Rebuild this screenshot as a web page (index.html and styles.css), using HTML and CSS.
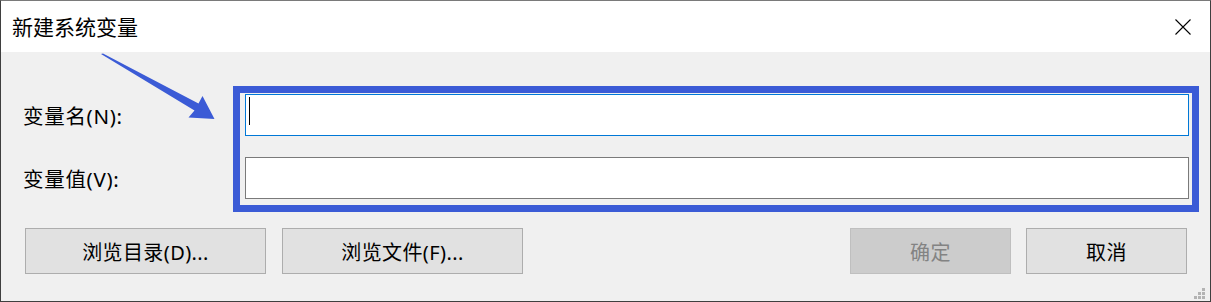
FILE: index.html
```html
<!DOCTYPE html>
<html lang="zh-CN">
<head>
<meta charset="utf-8">
<title>新建系统变量</title>
<link rel="stylesheet" href="styles.css">
</head>
<body>
<div class="window">
  <div class="titlebar">
    <span class="title">新建系统变量</span>
    <svg class="close" width="16" height="16" viewBox="0 0 16 16" aria-label="关闭">
      <path d="M0.5 0.5 L15.5 15.5 M15.5 0.5 L0.5 15.5" stroke="#000" stroke-width="1.1" fill="none"/>
    </svg>
  </div>
  <div class="content">
    <div class="form">
      <label class="label">变量名(N):</label>
      <div class="field focused"><span class="caret"></span></div>
      <label class="label">变量值(V):</label>
      <div class="field"></div>
    </div>
    <div class="buttons">
      <button class="btn wide">浏览目录(D)...</button>
      <button class="btn wide">浏览文件(F)...</button>
      <button class="btn narrow disabled push">确定</button>
      <button class="btn narrow">取消</button>
    </div>
  </div>
  <div class="highlight"></div>
  <svg class="arrow" width="230" height="130" viewBox="0 0 230 130">
    <polygon points="101,54 103,53.5 198.5,103.5 202.5,96 214.5,119 188.5,117.5 194.5,110.5" fill="#3b5bd6"/>
  </svg>
  <svg class="grip" width="11" height="11" viewBox="0 0 11 11">
    <rect x="8" y="0" width="3" height="3" fill="#b3b3b3"/>
    <rect x="4" y="4" width="3" height="3" fill="#b3b3b3"/>
    <rect x="8" y="4" width="3" height="3" fill="#b3b3b3"/>
    <rect x="0" y="8" width="3" height="3" fill="#b3b3b3"/>
    <rect x="4" y="8" width="3" height="3" fill="#b3b3b3"/>
    <rect x="8" y="8" width="3" height="3" fill="#b3b3b3"/>
  </svg>
</div>
</body>
</html>
```
FILE: styles.css
```css
* { box-sizing: border-box; }
html, body {
  margin: 0;
  padding: 0;
  background: #f0f0f0;
}
body {
  font-family: "Noto Sans", "Noto Sans CJK SC", sans-serif;
  color: #000;
}
.window {
  position: relative;
  width: 1211px;
  height: 302px;
  border: 1px solid #3f3f3f;
  border-top-color: #7a7a7a;
  background: #f0f0f0;
  display: flex;
  flex-direction: column;
  overflow: hidden;
}
.titlebar {
  height: 51px;
  background: #fff;
  display: flex;
  align-items: center;
  justify-content: space-between;
  padding-left: 11px;
  padding-right: 19px;
  flex: none;
}
.title {
  font-size: 21px;
  line-height: 26px;
}
.close { display: block; }
.content {
  flex: 1;
  padding: 42px 21px 0 22px;
  display: flex;
  flex-direction: column;
}
.form {
  display: grid;
  grid-template-columns: 222px 944px;
  grid-auto-rows: 42px;
  row-gap: 21px;
  align-items: center;
}
.label {
  font-size: 20.5px;
  line-height: 26px;
  letter-spacing: 0.7px;
  padding-top: 1px;
}
.field {
  height: 42px;
  background: #fff;
  border: 1px solid #7a7a7a;
  padding: 2px 0 0 3px;
}
.field.focused { border-color: #0078d7; }
.caret {
  display: block;
  width: 1px;
  height: 28px;
  background: #000;
}
.buttons {
  display: flex;
  margin-top: 29px;
  margin-left: 2px;
  margin-right: 2px;
  gap: 16px;
}
.btn {
  font-family: inherit;
  font-size: 20px;
  letter-spacing: 0.4px;
  height: 46px;
  background: #e1e1e1;
  border: 1px solid #adadad;
  color: #000;
  padding: 0;
  margin: 0;
}
.btn.wide { width: 241px; }
.btn.narrow { width: 161px; }
.btn.push { margin-left: auto; margin-right: -1px; }
.btn.disabled {
  background: #cccccc;
  border-color: #bfbfbf;
  color: #838383;
}
.highlight {
  position: absolute;
  left: 232px;
  top: 85px;
  width: 966px;
  height: 126px;
  border: 7px solid #3b5bd6;
  pointer-events: none;
}
.arrow {
  position: absolute;
  left: -1px;
  top: -1px;
}
.grip {
  position: absolute;
  left: 1193px;
  top: 287px;
}
```
